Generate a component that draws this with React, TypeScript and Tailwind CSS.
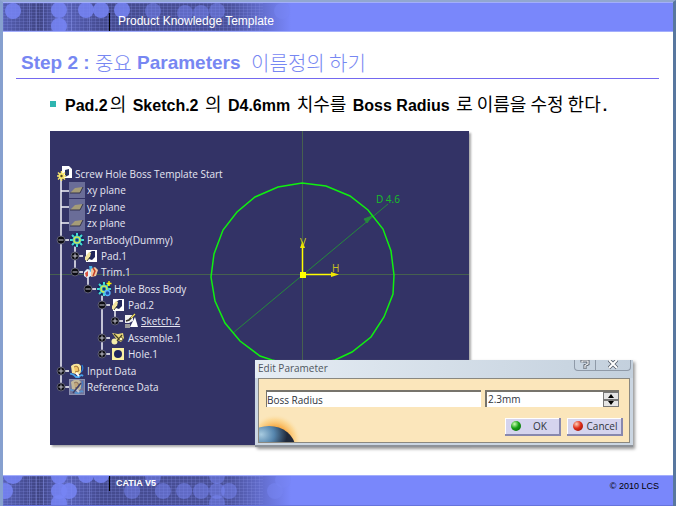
import type { ReactNode } from "react";

type IconName = "part" | "plane" | "gear" | "gearNew" | "pad" | "trim" | "sketch" | "assemble" | "hole" | "input" | "reference";

type TreeNode = {
  label: string;
  icon: IconName;
  indent: string;
  toggle?: "open" | "closed";
  selected?: boolean;
};

const treeNodes: TreeNode[] = [
  { label: "Screw Hole Boss Template Start", icon: "part", indent: "pl-0" },
  { label: "xy plane", icon: "plane", indent: "pl-3" },
  { label: "yz plane", icon: "plane", indent: "pl-3" },
  { label: "zx plane", icon: "plane", indent: "pl-3" },
  { label: "PartBody(Dummy)", icon: "gear", indent: "pl-0", toggle: "open" },
  { label: "Pad.1", icon: "pad", indent: "pl-[14px]", toggle: "closed" },
  { label: "Trim.1", icon: "trim", indent: "pl-[14px]", toggle: "open" },
  { label: "Hole Boss Body", icon: "gearNew", indent: "pl-[27px]", toggle: "open" },
  { label: "Pad.2", icon: "pad", indent: "pl-[41px]", toggle: "open" },
  { label: "Sketch.2", icon: "sketch", indent: "pl-[54px]", toggle: "closed", selected: true },
  { label: "Assemble.1", icon: "assemble", indent: "pl-[41px]", toggle: "closed" },
  { label: "Hole.1", icon: "hole", indent: "pl-[41px]", toggle: "closed" },
  { label: "Input Data", icon: "input", indent: "pl-0", toggle: "closed" },
  { label: "Reference Data", icon: "reference", indent: "pl-0", toggle: "closed" },
];

const gear = (
  <>
    <circle cx="8" cy="8" r="7" fill="#17265c" />
    <path d="M8 1 V15 M1 8 H15 M3 3 L13 13 M13 3 L3 13" stroke="#43dcd4" strokeWidth="2" />
    <circle cx="8" cy="8" r="4.5" fill="#2fb5c4" />
    <circle cx="8" cy="8" r="3" fill="none" stroke="#c8e85a" strokeWidth="1.5" />
    <circle cx="8" cy="8" r="1.5" fill="#1c3470" />
  </>
);

const scroll = (
  <>
    <path d="M2 3 Q5 0 10 1 L12 3 L12 9 Q11 12 7 11 L3 10 Z" fill="#f8e49a" />
    <path d="M5 4 Q7 2 9 4 L10 8 L6 9" fill="#f5c765" stroke="#8a5a28" strokeWidth="0.8" />
    <path d="M1 11 Q4 10 7 14 L10 14 Q12 11 14 13" fill="none" stroke="#48a6ee" strokeWidth="1.8" />
    <path d="M13 2 Q15 6 12 9" fill="none" stroke="#2a80d8" strokeWidth="1.2" />
    <path d="M7 10 L10 13" stroke="#fff" strokeWidth="1.8" />
  </>
);

const icons: Record<IconName, ReactNode> = {
  part: (
    <>
      <path d="M5 0 H12 L15 3 V12 H5 Z" fill="#fff" />
      <path d="M8 4 L12 3 V9 L8 11 Z" fill="#27315f" />
      <path d="M4.5 5 V15 M0 10 H9 M1 6.500 L8 13.500 M8 6.500 L1 13.500" stroke="#f5e36c" strokeWidth="1.5" />
      <circle cx="4.5" cy="10" r="3" fill="#f5e36c" />
      <circle cx="4.5" cy="10" r="1.2" fill="#4b4424" />
    </>
  ),
  plane: (
    <>
      <rect width="16" height="16" fill="#6a6d98" />
      <path d="M1 11 L6 6 L14 5 L11 11 Z" fill="#a59c77" />
      <path d="M1 11 L11 11 L14 5" fill="none" stroke="#33334e" strokeWidth="1" />
    </>
  ),
  gear,
  gearNew: (
    <>
      {gear}
      <circle cx="11.5" cy="12" r="2.5" fill="#1c4aa8" stroke="#59b6ff" strokeWidth="1.3" />
      <path d="M13 0 V5 M10.500 2.500 H15.500" stroke="#fff200" strokeWidth="1.4" />
    </>
  ),
  pad: (
    <>
      <rect x="3" y="2" width="11" height="12" fill="#fff" />
      <path d="M6 5 L9 3 H12 V9 L9 12 L6 11 Z" fill="#22285c" />
      <path d="M2 9 L6 4 L8 5 L7 9 L4 13 L2 12 Z" fill="#f2e4a0" />
      <path d="M4 13 L7 9" stroke="#49452f" strokeWidth="1" />
    </>
  ),
  trim: (
    <>
      <path d="M1 8 L4 5 L8 6 V12 L4 14 L1 12 Z" fill="#e6eef4" />
      <path d="M2 9 L5 7 V12 L3 13 Z" fill="#da5340" />
      <path d="M6 2 L9 2 L10 6 L7 8 Z" fill="#46b4e4" />
      <path d="M8 5 L12 3 L15 6 L13 12 L8 13 Z" fill="#f0c7a0" />
      <path d="M10 4 L12 7 L10 12" fill="none" stroke="#c23e24" strokeWidth="1.5" />
    </>
  ),
  sketch: (
    <>
      <path d="M2 2 H10 V8 L6 10 H2 Z" fill="#f1f1f1" />
      <path d="M12 4 L15 14 H7 Z" fill="#fff" />
      <path d="M3 8 L6 7 L12 1" fill="none" stroke="#39352b" strokeWidth="1.8" />
      <path d="M8 5 L12 1" stroke="#f3e060" strokeWidth="1.2" />
      <rect x="2" y="11" width="5" height="4" fill="#9b9b9b" />
    </>
  ),
  assemble: (
    <>
      <path d="M2 3 L8 4 L13 3 L14 8 L11 12 L7 10 Z" fill="#e8d878" />
      <circle cx="4.5" cy="11.5" r="3" fill="#f5edaa" />
      <path d="M4 4 L9 9 M12 5 L7 11" stroke="#403c25" strokeWidth="1.2" />
      <circle cx="11" cy="9" r="1.8" fill="#fff7bf" stroke="#5c542b" strokeWidth="0.8" />
    </>
  ),
  hole: (
    <>
      <rect x="2" y="2" width="12" height="12" fill="#fbf1a2" />
      <circle cx="8" cy="8" r="4" fill="#1f2560" />
    </>
  ),
  input: scroll,
  reference: (
    <>
      <rect width="16" height="16" fill="#73769c" />
      <g opacity="0.6">{scroll}</g>
      <path d="M4 14 L12 4" stroke="#3f4067" strokeWidth="1.5" />
      <rect x="0.5" y="0.5" width="15" height="15" fill="none" stroke="#8d90b0" />
    </>
  ),
};

function TreeRow({ node }: { node: TreeNode }) {
  return (
    <li className={`flex h-4 items-center ${node.indent}`}>
      {node.toggle ? (
        <button type="button" aria-label={`Toggle ${node.label}`} className="mr-1 size-2 shrink-0">
          <svg viewBox="0 0 8 8" className="size-2 overflow-visible">
            <path d="M8 4 H12" stroke="#fff" strokeWidth="1.5" />
            <circle cx="4" cy="4" r="4" fill="#0c0c12" stroke="#5c5c74" strokeWidth="1" />
            <path d={node.toggle === "open" ? "M1.500 4 H6.500" : "M1.500 4 H6.500 M4 1.500 V6.500"} stroke="#c4c4d0" strokeWidth="1" />
          </svg>
        </button>
      ) : null}
      <svg viewBox="0 0 16 16" className="size-4 shrink-0">
        {icons[node.icon]}
      </svg>
      <span className={`ml-0.5 whitespace-nowrap ${node.selected ? "underline" : ""}`}>{node.label}</span>
    </li>
  );
}

function FeatureTree() {
  return (
    <div className="relative w-fit pt-[35px] pl-[7px] text-[10px] leading-4 text-[#e6e6f2]">
      <svg className="absolute top-[35px] left-[7px] h-[229px] w-20" fill="none" stroke="#f4f4fa" strokeWidth="1.5">
        <path d="M4 10 V221 M4 25 H12 M4 41 H12 M4 57 H12" />
        <path d="M18 80 V106 M31 110 V123 M45 128 V188 M58 144 V155" />
      </svg>
      <ul className="relative flex h-[229px] flex-col justify-between">
        {treeNodes.map((node) => (
          <TreeRow key={node.label} node={node} />
        ))}
      </ul>
    </div>
  );
}

function SketchView() {
  return (
    <svg viewBox="0 0 419 314" className="absolute inset-0 h-[314px] w-[419px]" fill="none">
      <path d="M252.500 0 V314 M0 143.500 H419" stroke="#46604f" />
      <path d="M183 202 L338 73" stroke="#258a3c" />
      <path d="M322 85 L314 88 L317 92 Z" fill="#258a3c" stroke="#258a3c" />
      <polygon
        points="252,52 276,55 300,65 318,79 333,98 341,120 344,144 343,163 334,186 321,206 302,221 285,229 253,236 222,229 210,225 190,210 175,192 165,170 161,146 164,123 173,99 187,81 205,66 228,56"
        stroke="#10f010"
        strokeWidth="1.5"
      />
      <path d="M252.500 144 V113 M253 143.500 H284" stroke="#ffff00" strokeWidth="1.5" />
      <path d="M250 117 L252.500 110 L255 117 Z M281 141 L289 143.500 L281 146 Z" fill="#f0e800" />
      <rect x="250" y="141" width="6" height="6" fill="#ffff00" />
      <g className="text-[10px]">
        <text x="326" y="72" fill="#16c026">D 4.6</text>
        <text x="250" y="115" fill="#d8d010">V</text>
        <text x="282" y="141" fill="#c8c020">H</text>
      </g>
    </svg>
  );
}

function EditParameterDialog() {
  return (
    <form
      aria-label="Edit Parameter"
      className="absolute top-[229px] left-[205px] w-[378px] border-b-2 border-[#8d9299] bg-[#cbd6e2] px-[3px] pb-[2px] text-[10px] text-[#30343c] shadow-[2px_2px_3px_#999]"
    >
      <div className="-mx-[3px] flex h-[18px] items-start justify-between bg-gradient-to-r from-[#e6edf4] to-[#c3d0dd] pr-0.5 pl-[3px]">
        <h2 className="text-[10px] leading-4 text-[#4f5660]">Edit Parameter</h2>
        <div className="flex h-[11px] overflow-hidden rounded-b border border-t-0 border-[#8f9aa8]">
          <button type="button" aria-label="Help" className="flex w-[21px] justify-center border-r border-[#8f9aa8]">
            <svg viewBox="0 0 10 10" className="h-2.5 w-2.5" fill="none">
              <path d="M2 2.500 V1 H8 V4 L5 5.500 V9" stroke="#555d68" strokeWidth="3" />
              <path d="M2 2.500 V1 H8 V4 L5 5.500 V8.500" stroke="#fff" strokeWidth="1.2" />
            </svg>
          </button>
          <button type="button" aria-label="Close" className="flex w-[34px] justify-center">
            <svg viewBox="0 0 10 10" className="h-2.5 w-2.5" fill="none">
              <path d="M1 0 L9 8 M9 0 L1 8" stroke="#555d68" strokeWidth="3.5" />
              <path d="M1 0 L9 8 M9 0 L1 8" stroke="#fff" strokeWidth="2" />
            </svg>
          </button>
        </div>
      </div>

      <div className="relative overflow-hidden border border-[#8a8880] bg-[#fbe6bb] pt-[11px] pr-[6px] pb-[6px] pl-[7px]">
        <svg viewBox="0 0 44 30" className="absolute bottom-0 left-0 h-[30px] w-11">
          <defs>
            <radialGradient id="glow">
              <stop offset="0.5" stopColor="#f8a840" />
              <stop offset="0.8" stopColor="#fcd080" stopOpacity="0.6" />
              <stop offset="1" stopColor="#fbe6bb" stopOpacity="0" />
            </radialGradient>
            <radialGradient id="globe" cx="0.35" cy="0.2">
              <stop offset="0" stopColor="#a8cbe0" />
              <stop offset="0.5" stopColor="#5686ae" />
              <stop offset="1" stopColor="#20293a" />
            </radialGradient>
          </defs>
          <ellipse cx="16" cy="28" rx="26" ry="26" fill="url(#glow)" />
          <ellipse cx="10" cy="35" rx="26" ry="21" fill="url(#globe)" />
        </svg>

        <div className="relative mr-1 flex gap-1">
          <input
            aria-label="Parameter name"
            defaultValue="Boss Radius"
            className="h-[17px] min-w-0 flex-1 border-t-2 border-l border-[#77746c] bg-white text-[10px] outline-none"
          />
          <div className="flex h-[17px] w-[134px] border-t-2 border-l-2 border-[#77746c] bg-white">
            <input aria-label="Value" defaultValue="2.3mm" className="w-0 flex-1 pl-px text-[10px] outline-none" />
            <div className="flex w-4 flex-col">
              <button type="button" aria-label="Increase" className="flex flex-1 items-center justify-center border border-[#777] bg-[#e5e5e5]">
                <svg viewBox="0 0 8 4" className="h-1 w-2">
                  <path d="M4 0 L7 4 H1 Z" />
                </svg>
              </button>
              <button type="button" aria-label="Decrease" className="flex flex-1 items-center justify-center border border-[#777] bg-[#e5e5e5]">
                <svg viewBox="0 0 8 4" className="h-1 w-2">
                  <path d="M4 4 L7 0 H1 Z" />
                </svg>
              </button>
            </div>
          </div>
        </div>

        <div className="relative mt-[11px] flex justify-end gap-1.5">
          <button
            type="submit"
            className="flex h-[18px] w-14 items-center border-r-2 border-b-2 border-[#8888ae] bg-[#d5d4ee] pl-1.5 shadow-[inset_1px_1px_#fff]"
          >
            <span className="size-2.5 rounded-full bg-[radial-gradient(circle_at_35%_30%,#c8ffb0,#16a016_45%,#065a06)]" />
            <span className="flex-1 text-center">OK</span>
          </button>
          <button
            type="button"
            className="flex h-[18px] w-14 items-center border-r-2 border-b-2 border-[#8888ae] bg-[#d5d4ee] pl-1.5 shadow-[inset_1px_1px_#fff]"
          >
            <span className="size-2.5 rounded-full bg-[radial-gradient(circle_at_35%_30%,#ffd0b8,#e02c18_45%,#800c04)]" />
            <span className="flex-1 text-center">Cancel</span>
          </button>
        </div>
      </div>
    </form>
  );
}

function BannerArt({ id, dots }: { id: string; dots: [number, number, number][] }) {
  return (
    <svg className="absolute inset-0 h-full w-[300px]" fill="none">
      <defs>
        <linearGradient id={`${id}-fade`}>
          <stop offset="0" stopColor="#5660b4" />
          <stop offset="0.12" stopColor="#3f4482" />
          <stop offset="0.2" stopColor="#5a64bc" />
          <stop offset="0.33" stopColor="#444a8e" />
          <stop offset="0.75" stopColor="#4a519a" />
          <stop offset="0.96" stopColor="#7987fb" />
        </linearGradient>
        <pattern id={`${id}-mesh`} width="4" height="3" patternUnits="userSpaceOnUse">
          <path d="M0 0.500 H4 M0.500 0 V3" stroke="#8d98ee" opacity="0.2" />
        </pattern>
      </defs>
      <rect width="300" height="100%" fill={`url(#${id}-fade)`} />
      <rect width="260" height="100%" fill={`url(#${id}-mesh)`} />
      <path d="M26.500 0 V32 M33.500 0 V32 M40.500 0 V32 M68.500 0 V32 M86.500 0 V32" stroke="#8d98ee" opacity="0.4" />
      {dots.map(([cx, cy, r]) => (
        <circle key={`${cx}-${cy}`} cx={cx} cy={cy} r={r} fill="#7785f4" opacity={cx > 125 ? 0.5 : 0.85} />
      ))}
    </svg>
  );
}

const headerDots: [number, number, number][] = [
  [10, 8, 8], [56, 7, 8], [56, 23, 8], [83, 7, 8], [98, 7, 8], [119, 7, 8], [150, 8, 8], [182, 10, 8], [198, 10, 8], [214, 8, 8], [279, 8, 8],
];

const footerDots: [number, number, number][] = [
  [10, -2, 10], [2, 15, 8], [56, 0, 8], [56, 15, 8], [66, 15, 8], [56, 27, 8], [83, -1, 8], [98, -1, 8], [129, 15, 8], [150, 1, 8], [160, 15, 8], [181, 15, 8],
  [198, 15, 8], [214, 0, 8], [214, 15, 8], [226, 15, 8], [214, 27, 8], [272, 15, 8], [280, 4, 8],
];

const titleHangul = "font-['Noto_Sans_CJK_KR',sans-serif] text-[20px] font-light";
const bodyHangul = "mx-0.5 font-['Noto_Sans_CJK_KR',sans-serif] text-[18px] font-normal";

export default function App() {
  return (
    <div className="flex min-h-screen flex-col overflow-hidden border-t-2 border-r-[3px] border-l-[3px] border-t-[#92a7d0] border-r-[#58779f] border-l-[#86a0cf] bg-white font-['Liberation_Sans',Arial,sans-serif]">
      <header className="relative h-[30px] border-y border-[#a3aefc] bg-[#7987fb]">
        <BannerArt id="header" dots={headerDots} />
        <div className="relative flex h-full items-end">
          <span className="ml-[106px] h-[18px] w-px bg-black" />
          <p className="mb-px ml-2 text-[12px] leading-[18px] text-white">Product Knowledge Template</p>
        </div>
      </header>

      <main className="flex-1 pr-[14px] pl-[13px]">
        <h1 className="mt-[16px] flex h-[31px] items-center border-b border-[#7468f0] pl-[5px] text-[19px] leading-[30px] font-bold whitespace-pre text-[#7787f2]">
          Step 2 : <span className={titleHangul}>중요</span> Parameters{"  "}
          <span className={titleHangul}>이름정의 하기</span>
        </h1>

        <ul>
          <li className="mt-[15px] flex h-5 items-center pl-[34px] text-[16px] leading-5 font-bold">
            <span className="mr-[9px] size-1.5 bg-[#2fb5b0]" />
            <p className="whitespace-pre">
              Pad.2<span className={bodyHangul}>의</span> Sketch.2 <span className={bodyHangul}>의</span> D4.6mm <span className={bodyHangul}>치수를</span> Boss
              Radius <span className={bodyHangul}>로 이름을 수정 한다</span>.
            </p>
          </li>
        </ul>

        <div className="relative mt-[17px] ml-[34px] h-[314px] max-w-[419px] bg-[#333366] font-['Open_Sans','Noto_Sans',sans-serif] shadow-[2px_2px_2px_#aaa]">
          <SketchView />
          <FeatureTree />
          <EditParameterDialog />
        </div>
      </main>

      <footer className="relative h-[31px] border-y border-t-[#a3aefc] border-b-[#6674dc] bg-[#7987fb]">
        <BannerArt id="footer" dots={footerDots} />
        <div className="relative flex items-start pr-[14px]">
          <span className="ml-[106px] h-[15px] w-px bg-black" />
          <p className="ml-1.5 text-[9px] leading-[15px] font-bold text-white">CATIA V5</p>
          <p className="mt-[3px] ml-auto text-[9px] leading-[15px] text-black">© 2010 LCS</p>
        </div>
      </footer>
    </div>
  );
}
